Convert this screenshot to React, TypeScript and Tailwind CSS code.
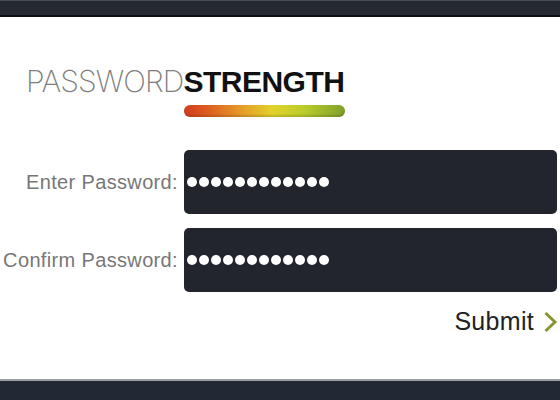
import React from "react";

function Dots() {
  return (
    <div className="flex items-center gap-[2px] pl-[3px]">
      {Array.from({ length: 12 }).map((_, i) => (
        <span key={i} className="block w-[10px] h-[10px] rounded-full bg-white" />
      ))}
    </div>
  );
}

function Row({ label }: { label: string }) {
  return (
    <div className="flex items-center">
      <div className="w-[181px] text-right pr-[3px] text-[20px] leading-none text-[#777777] tracking-[0.35px]" style={{ fontFamily: '"Liberation Sans", Arial, sans-serif' }}>
        {label}
      </div>
      <div className="ml-[3px] w-[373px] h-[64px] rounded-[5px] bg-[#22252d] flex items-center">
        <Dots />
      </div>
    </div>
  );
}

export default function App() {
  return (
    <div className="w-[560px] h-[400px] bg-white flex flex-col overflow-hidden" style={{ fontFamily: '"Liberation Sans", Arial, sans-serif' }}>
      <div className="h-[17px] bg-[#252932] border-t border-[#4a4d55] border-b-2 border-b-[#0d0e11]" />
      <div className="flex-1 flex flex-col">
        <div className="pl-[26px] pt-[49px]">
          <div className="flex items-baseline leading-none text-[30px]">
            <span className="text-[#7e7e7e] tracking-[-0.9px]" style={{ fontFamily: 'Inter, "Liberation Sans", sans-serif', fontWeight: 200 }}>PASSWORD</span>
            <span className="text-[#111] font-bold tracking-[-0.5px]">STRENGTH</span>
          </div>
          <div className="ml-[158px] mt-[8px] w-[161px] h-[12px] rounded-full bg-[linear-gradient(90deg,#d23c1f_0%,#dd5e22_15%,#e59a28_35%,#e2d32c_55%,#b9cc2a_75%,#7f9f2b_100%)] shadow-[inset_0_-2px_2px_rgba(0,0,0,0.15)]" />
        </div>
        <div className="mt-[33px] flex flex-col gap-[14px]">
          <Row label="Enter Password:" />
          <Row label="Confirm Password:" />
        </div>
        <div className="mt-[17px] flex items-center justify-end pr-[2px]">
          <span className="text-[25px] leading-none text-[#222] tracking-[0.3px]">Submit</span>
          <svg width="15" height="22" viewBox="0 0 15 22" className="ml-[9px]">
            <path d="M2.5 2 L12 11 L2.5 20" fill="none" stroke="#8a9430" strokeWidth="3" />
          </svg>
        </div>
      </div>
      <div className="h-[21px] bg-[#222834] border-t-2 border-[#9a9ea6]" />
    </div>
  );
}
